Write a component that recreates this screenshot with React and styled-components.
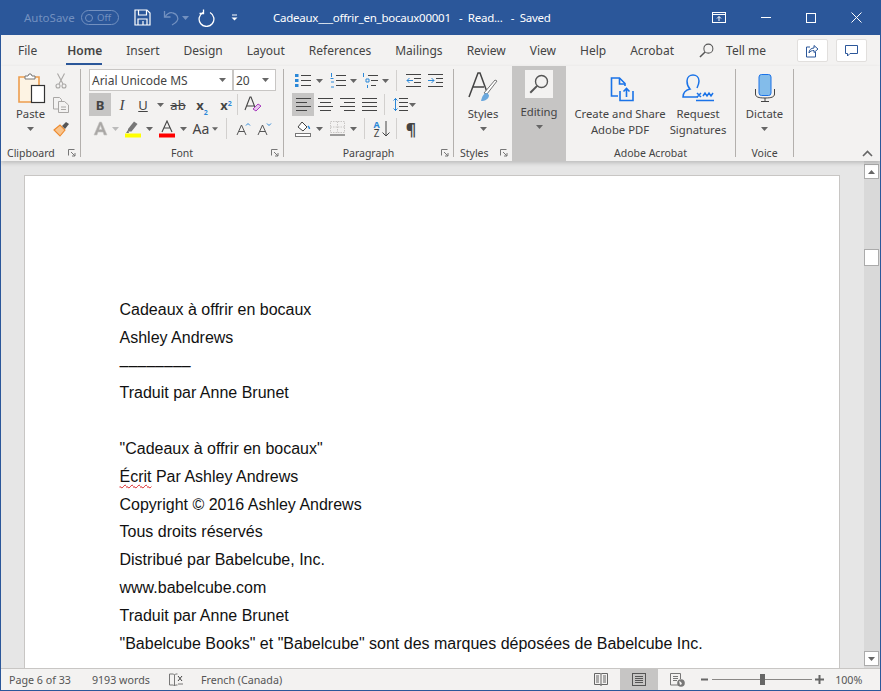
import React from 'react';
import styled, { createGlobalStyle } from 'styled-components';

const BLUE = '#2b579a';
const INK = '#444444';
const LIGHT = '#2b88d8';

const GlobalStyle = createGlobalStyle`
  html, body { margin: 0; padding: 0; background: #fff; }
  body { font-family: "Noto Sans", "Open Sans", sans-serif; font-size: 12px; color: ${INK}; }
`;

const Window = styled.div`
  width: 881px;
  height: 691px;
  box-sizing: border-box;
  display: flex;
  flex-direction: column;
  border: 1px solid ${BLUE};
  border-top: 0;
  overflow: hidden;
`;

const TitleBar = styled.div`
  height: 35px;
  flex: none;
  margin: 0 -1px;
  background: ${BLUE};
  color: #fff;
  display: flex;
  align-items: center;
`;

const AutoSave = styled.span`
  margin-left: 24px;
  color: #7391c0;
  font-size: 11.5px;
  width: 57px;
`;

const Toggle = styled.span`
  width: 38px;
  height: 15px;
  border: 1px solid #7391c0;
  border-radius: 9px;
  box-sizing: border-box;
  display: flex;
  align-items: center;
  gap: 4px;
  padding-left: 3px;
  color: #7391c0;
  font-size: 9.5px;
  &::before {
    content: '';
    width: 8px;
    height: 8px;
    border-radius: 50%;
    border: 1px solid #7391c0;
    box-sizing: border-box;
  }
`;

const Slot = styled.span`
  width: ${p => p.$w}px;
  margin-left: ${p => p.$ml || 0}px;
  flex: none;
  display: flex;
  align-items: center;
  justify-content: center;
`;

const DocTitle = styled.span`
  margin-left: 35px;
  width: 439px;
  font-size: 11.5px;
  letter-spacing: -0.25px;
  white-space: pre;
`;

const TabRow = styled.div`
  height: 31px;
  flex: none;
  background: #f3f2f1;
  display: flex;
  align-items: center;
  padding-left: 17px;
  gap: 24px;
`;

const Tab = styled.span`
  position: relative;
  font-size: 12px;
  font-weight: ${p => (p.$active ? 600 : 400)};
  margin-right: ${p => p.$mr || 0}px;
  line-height: 18px;
  color: ${INK};
  &::after {
    content: ${p => (p.$active ? "''" : 'none')};
    position: absolute;
    left: -1px;
    right: 0;
    bottom: -5px;
    height: 2px;
    background: ${BLUE};
  }
`;

const TellMe = styled.span`
  display: flex;
  align-items: center;
  gap: 12px;
  margin-left: 1px;
  font-size: 12px;
`;

const CornerButton = styled.span`
  width: 31px;
  height: 23px;
  background: #fff;
  border: 1px solid #e1dfdd;
  border-radius: 2px;
  box-sizing: border-box;
  display: flex;
  align-items: center;
  justify-content: center;
  margin-left: ${p => p.$ml}px;
`;

const Ribbon = styled.div`
  height: 95px;
  flex: none;
  background: #f3f2f1;
  display: flex;
  position: relative;
  z-index: 1;
  box-shadow: 0 2px 4px rgba(0, 0, 0, 0.18);
`;

const Group = styled.div`
  width: ${p => p.$w}px;
  flex: none;
  display: flex;
  flex-direction: column;
  background: ${p => (p.$selected ? '#c6c5c4' : 'transparent')};
`;

const GroupBody = styled.div`
  height: 79px;
  display: flex;
  padding-left: ${p => p.$pl || 0}px;
`;

const GroupLabel = styled.div`
  height: 16px;
  display: flex;
  align-items: center;
  justify-content: ${p => (p.$left ? 'flex-start' : 'center')};
  padding-left: ${p => p.$pl || 0}px;
  font-size: 10.5px;
  line-height: 14px;
  position: relative;
`;

const Launcher = styled.span`
  margin-left: auto;
  margin-right: 4px;
  display: flex;
`;

const CornerLauncher = styled.span`
  position: absolute;
  right: 4px;
  display: flex;
`;

const Divider = styled.div`
  width: 1px;
  flex: none;
  margin: 3px 0 4px;
  background: #b3b0ad;
`;

const BigButton = styled.div`
  width: ${p => p.$w}px;
  flex: none;
  display: flex;
  flex-direction: column;
  align-items: center;
  padding-top: ${p => p.$pt ?? 7}px;
  font-size: 11.3px;
  line-height: 16px;
  text-align: center;
`;

const BigIcon = styled.div`
  height: ${p => p.$h || 32}px;
  display: flex;
  align-items: center;
  justify-content: center;
  margin-left: ${p => p.$ml || 0}px;
  margin-bottom: ${p => p.$mb ?? 2}px;
`;

const EditingIcon = styled.div`
  width: 28px;
  height: 28px;
  background: #f3f2f1;
  display: flex;
  align-items: center;
  justify-content: center;
  margin-bottom: 6px;
`;

const BigCaret = styled.div`
  height: 14px;
  display: flex;
  align-items: center;
`;

const SmallColumn = styled.div`
  display: flex;
  flex-direction: column;
  padding-top: 3px;
  margin-left: 3px;
  width: 20px;
`;

const SmallTool = styled.span`
  height: 24px;
  display: flex;
  align-items: center;
  justify-content: center;
`;

const Rows = styled.div`
  display: flex;
  flex-direction: column;
  gap: 1px;
  padding-top: 3px;
`;

const Row = styled.div`
  display: flex;
  height: ${p => p.$h || 23}px;
  align-items: stretch;
`;

const Tool = styled.span`
  width: ${p => p.$w}px;
  margin-left: ${p => p.$ml || 0}px;
  flex: none;
  display: flex;
  align-items: center;
  justify-content: center;
  gap: ${p => p.$gap || 0}px;
  background: ${p => (p.$on ? '#c6c5c4' : 'transparent')};
`;

const RowLine = styled.span`
  width: 1px;
  flex: none;
  margin: 1px ${p => p.$r ?? 4}px 1px ${p => p.$l ?? 4}px;
  background: #d2d0ce;
`;

const Combo = styled.span`
  height: 22px;
  width: ${p => p.$w}px;
  margin-left: ${p => p.$ml || 0}px;
  box-sizing: border-box;
  background: #fff;
  border: 1px solid #c8c6c4;
  display: flex;
  align-items: center;
  justify-content: space-between;
  padding: 0 6px 0 2px;
  font-size: 12px;
  white-space: nowrap;
`;

const SortLetters = styled.span`
  display: flex;
  flex-direction: column;
  align-items: center;
  width: 8px;
`;

const SortLetter = styled.span`
  height: 9px;
  line-height: 9px;
  font-size: ${p => p.$size}px;
  font-weight: ${p => (p.$blue ? 700 : 400)};
  color: ${p => (p.$blue ? LIGHT : INK)};
`;

const Collapse = styled.div`
  margin-left: auto;
  margin-right: 7px;
  align-self: flex-end;
  padding-bottom: 4px;
  display: flex;
`;

const Workspace = styled.div`
  flex: 1;
  min-height: 0;
  display: flex;
  background: #e6e6e6;
`;

const Canvas = styled.div`
  flex: 1;
  min-width: 0;
  padding: 14px 23px 0;
  overflow: hidden;
`;

const Page = styled.div`
  height: 520px;
  box-sizing: border-box;
  width: 816px;
  background: #fff;
  border: 1px solid #c8c6c4;
  padding: 120px 0 0 94.5px;
  font-family: "Liberation Sans", Arial, sans-serif;
  font-size: 16px;
  line-height: 27.8px;
  color: #111;
`;

const Para = styled.div`
  min-height: 27.8px;
  white-space: nowrap;
`;

const Misspelt = styled.span`
  text-decoration: underline wavy #d92020 1px;
  text-underline-offset: 2px;
`;

const Scrollbar = styled.div`
  width: 16px;
  flex: none;
  box-sizing: border-box;
  background: #d9d9d9;
  display: flex;
  flex-direction: column;
  padding: 3px 0 2px 0;
`;

const ScrollButton = styled.div`
  width: 15px;
  height: 15px;
  box-sizing: border-box;
  background: #fff;
  border: 1px solid #ababab;
  display: flex;
  align-items: center;
  justify-content: center;
  margin-top: ${p => p.$mt || 0};
`;

const Thumb = styled.div`
  width: 15px;
  height: 17px;
  box-sizing: border-box;
  background: #fff;
  border: 1px solid #ababab;
  margin-top: 70px;
`;

const StatusBar = styled.div`
  height: 22px;
  flex: none;
  box-sizing: border-box;
  border-top: 1px solid #c8c6c4;
  background: #f3f2f1;
  display: flex;
  align-items: stretch;
  font-size: 10.7px;
  color: #555;
`;

const StatusText = styled.span`
  display: flex;
  align-items: center;
  margin-left: ${p => p.$ml}px;
  white-space: nowrap;
`;

const StatusIcon = styled.span`
  width: ${p => p.$w}px;
  margin-left: ${p => p.$ml || 0}px;
  flex: none;
  display: flex;
  align-items: center;
  justify-content: center;
  background: ${p => (p.$on ? '#c6c5c4' : 'transparent')};
`;

const ZoomTrack = styled.span`
  width: 100px;
  margin-left: 4px;
  flex: none;
  position: relative;
  align-self: center;
  height: 1px;
  background: #8a8886;
`;

const ZoomThumb = styled.span`
  position: absolute;
  left: 48px;
  top: -5px;
  width: 5px;
  height: 11px;
  background: #666;
`;

const Svg = ({ w, h, children, ...rest }) => (
  <svg width={w} height={h} viewBox={`0 0 ${w} ${h}`} fill="none" {...rest}>{children}</svg>
);

const Caret = ({ color = '#666' }) => (
  <Svg w={7} h={4}><path d="M0 0h7L3.5 4z" fill={color} /></Svg>
);

const SaveIcon = () => (
  <Svg w={17} h={17} stroke="#fff" strokeWidth="1.2">
    <path d="M1 1h12l3 3v12H1z" /><path d="M4.5 1v5h8V1M4 16v-6h9v6" /><path d="M9 12v4" />
  </Svg>
);

const UndoIcon = () => (
  <Svg w={17} h={16} stroke="#7391c0" strokeWidth="1.3">
    <path d="M1.5 1v6h6" /><path d="M2 7c2-3 5-5 8-4 4 1 6 5 4 8-1 2-3 3-5 4" />
  </Svg>
);

const RedoIcon = () => (
  <Svg w={17} h={18} stroke="#fff" strokeWidth="1.3">
    <path d="M5 3.5A7.4 7.4 0 1 0 12 3.5" /><path d="M5.5 0.5v4h-4" />
  </Svg>
);

const QatIcon = () => (
  <Svg w={7} h={7}><path d="M1 1h5" stroke="#fff" /><path d="M0.5 3.5h6L3.5 6.5z" fill="#fff" /></Svg>
);

const RibbonDisplayIcon = () => (
  <Svg w={14} h={11} stroke="#fff">
    <rect x=".5" y=".5" width="13" height="10" /><path d="M.5 2.5h13" /><path d="M7 9V4.5M5 6.5l2-2 2 2" />
  </Svg>
);

const SearchIcon = ({ color = '#555', size = 16 }) => (
  <svg width={size} height={size} viewBox="0 0 16 16" fill="none" stroke={color} strokeWidth="1.1">
    <circle cx="10" cy="6" r="4.8" /><path d="M6.5 9.5 1 15" strokeWidth="1.6" />
  </svg>
);

const ShareIcon = () => (
  <Svg w={14} h={14} stroke="#2b579a">
    <path d="M5 3H1.5v10h9V8" /><path d="M4 9c0-3 2-5 5-5V1.5L13 5l-4 3.5V6.500C7 6.500 5 7 4 9z" />
  </Svg>
);

const CommentIcon = () => (
  <Svg w={13} h={12} stroke="#2b579a"><path d="M.5 .5h12v8H5L2.500 11V8.500h-2z" /></Svg>
);

const PasteIcon = () => (
  <Svg w={28} h={31}>
    <path d="M1 4h20v25H1z" fill="#fdf3e3" stroke="#ed9d4e" strokeWidth="1.6" />
    <path d="M7 5V3h3l1-2h2l1 2h3v3H7z" fill="#fff" stroke="#777" />
    <rect x="13.500" y="12.500" width="13" height="17" fill="#fff" stroke="#333" strokeWidth="1.200" />
  </Svg>
);

const CutIcon = () => (
  <Svg w={12} h={16} stroke="#a9a7a5" strokeWidth="1.100">
    <path d="M2.500 .5 8 11M9.500 .5 4 11" /><circle cx="3" cy="13" r="2" /><circle cx="9" cy="13" r="2" />
  </Svg>
);

const CopyIcon = () => (
  <Svg w={16} h={16} stroke="#a9a7a5">
    <path d="M.5 .5h6l2 2V12h-8z" fill="#f3f2f1" /><path d="M5.500 4.500h6l4 3.500v7.500h-10z" fill="#f3f2f1" /><path d="M8 10h5M8 12.500h5" />
  </Svg>
);

const PainterIcon = () => (
  <Svg w={17} h={16}>
    <path d="M1 9 7 4l5 5-5 6C5 13 3 11 1 9z" fill="#f9c48c" stroke="#ed8a2f" strokeWidth="1.100" />
    <path d="M9 5l4-4 3 2-4 5z" fill="#555" />
  </Svg>
);

const Launch = () => (
  <Svg w={8} h={8} stroke="#777"><path d="M.5 .5h6M.5 .5v6" /><path d="M3 3l4 4M7 4v3H4" /></Svg>
);

const Letter = styled.span`
  font-family: ${p => (p.$serif ? '"Liberation Serif", serif' : '"Noto Sans", sans-serif')};
  font-size: ${p => p.$size || 13}px;
  font-weight: ${p => (p.$bold ? 700 : 400)};
  font-style: ${p => (p.$italic ? 'italic' : 'normal')};
  text-decoration: ${p => p.$deco || 'none'};
  color: ${p => p.$color || INK};
  line-height: 16px;
  position: relative;
`;

const Sub = styled.span`
  font-size: 7px;
  font-weight: 700;
  color: ${LIGHT};
  position: absolute;
  left: 100%;
  top: ${p => (p.$up ? -1 : 8)}px;
`;

const ClearIcon = () => (
  <Svg w={17} h={17}>
    <path d="M1 14 6 1h1l5 13M3 10h7" stroke="#444" strokeWidth="1.100" />
    <path d="M9 13l5-5 3 2-5 5z" fill="#e7c6ee" stroke="#a83dbd" />
  </Svg>
);

const EffectsA = () => (
  <Svg w={15} h={15}><path d="M1 14 6.500 1h2L14 14h-3l-1-3H5l-1 3zM6 8.500h3L7.500 4.500z" fill="#a9a7a5" stroke="#c8c6c4" strokeWidth=".6" /></Svg>
);

const Highlighter = () => (
  <Svg w={16} h={18}>
    <path d="M3 9 9 1.500l3.500 2.500-6 7.500H3z" fill="#777" /><path d="M3 10 1 13h3z" fill="#777" />
    <rect y="13.500" width="16" height="4" fill="#ffff00" />
  </Svg>
);

const FontColor = () => (
  <Svg w={16} h={18}>
    <path d="M3 12 8 1l5 11M5 8h6" stroke="#444" strokeWidth="1.100" />
    <rect y="13.500" width="16" height="4" fill="#ff0000" />
  </Svg>
);

const GrowFont = ({ down }) => (
  <Svg w={15} h={14}>
    <path d="M1 13 5.500 3 10 13M3 9.500h5" stroke="#555" />
    <path d={down ? 'M10 1.500l2 2 2-2' : 'M10 3.500l2-2 2 2'} stroke={LIGHT} />
  </Svg>
);

const Lines = ({ rows, w = 15, h = 15 }) => (
  <Svg w={w} h={h} stroke="#444">
    {rows.map(([x1, x2, y], i) => <path key={i} d={`M${x1} ${y}.5H${x2}`} />)}
  </Svg>
);

const BulletsIcon = () => (
  <Svg w={16} h={15}>
    <path d="M0 1h3.500v3H0zM0 6h3.500v3H0zM0 11h3.500v3H0z" fill={LIGHT} />
    <path d="M6 2.500h10M6 7.500h10M6 12.500h10" stroke="#444" />
  </Svg>
);

const NumberingIcon = () => (
  <Svg w={16} h={15}>
    <path d="M1.500 0v4M1 9h3M1 14h3M0.500 5.500h3" stroke={LIGHT} />
    <path d="M6 2.500h10M6 7.500h10M6 12.500h10" stroke="#444" />
  </Svg>
);

const MultiIcon = () => (
  <Svg w={16} h={15}>
    <path d="M1.500 0v4M4 6h3v3H4zM5.500 12v3" stroke={LIGHT} />
    <path d="M6 2.500h10M9 7.500h7M9 12.500h5" stroke="#444" />
  </Svg>
);

const IndentIcon = ({ flip }) => (
  <Svg w={15} h={13}>
    <path d="M0 .5h15M8 4.500h7M8 8.500h7M0 12.500h15" stroke="#444" />
    <path d={flip ? 'M0 6.500h6M3.500 4l2.500 2.500L3.500 9' : 'M1 6.500h6M3.500 4 1 6.500 3.500 9'} stroke={LIGHT} />
  </Svg>
);

const LineSpacing = () => (
  <Svg w={15} h={15}>
    <path d="M2.500 1v13M.5 3.500l2-2 2 2M.5 11.500l2 2 2-2" stroke={LIGHT} />
    <path d="M6 1.500h9M6 5.500h9M6 9.500h9M6 13.500h9" stroke="#444" />
  </Svg>
);

const ShadingIcon = () => (
  <Svg w={16} h={16}>
    <path d="M3 6 7 1l5 5-4 4z" fill="#fff" stroke="#444" />
    <path d="M13 5c1 1 1.500 2 1.500 3" stroke={LIGHT} strokeWidth="1.500" />
    <rect x=".5" y="12.500" width="15" height="3" fill="#fff" stroke="#777" />
  </Svg>
);

const BordersIcon = () => (
  <Svg w={15} h={15}>
    <path d="M.5 .5h14v11H.5zM7.500 .5v11M.5 6h14" stroke="#c8c6c4" strokeDasharray="1.500 1" />
    <path d="M0 14h15" stroke="#444" />
  </Svg>
);

const SortArrow = () => (
  <Svg w={8} h={17}><path d="M4 1v15M.5 12.500 4 16l3.500-3.500" stroke="#444" /></Svg>
);

const StylesIcon = () => (
  <Svg w={31} h={31}>
    <path d="M1 25 10 1h2l7 19M5 15h11" stroke="#444" strokeWidth="1.500" />
    <path d="M16 21 27 8l2 1-10 13z" fill="#fff" stroke="#777" />
    <path d="M13 29c1-5 3-8 6-8l2 2c0 4-4 6-8 6z" fill="#6ba8dd" />
  </Svg>
);

const PdfIcon = () => (
  <Svg w={24} h={25} stroke="#1a73e8" strokeWidth="1.600">
    <path d="M8 19H1.500V1h8L15 6.500V9" /><path d="M9.500 1v6H15" />
    <path d="M10 14v9.500h13V14" /><path d="M16.500 20v-8M13.500 14.500l3-3 3 3" />
  </Svg>
);

const SignIcon = () => (
  <Svg w={32} h={28} stroke="#1a73e8" strokeWidth="1.500">
    <path d="M16 23H1c0-5 3-7 7-8-2-2-3-5-3-8 0-4 3-6 6-6s6 2 6 6c0 3-1 5-2 7" />
    <path d="M15 19l4 4M19 19l-4 4M21 22l2-3 2 3 2-3 2 3 2-3" /><path d="M14 26.500h18" />
  </Svg>
);

const MicIcon = () => (
  <Svg w={20} h={28}>
    <rect x="4" y=".5" width="12" height="21" rx="2.500" fill="#83bcea" stroke="#1a73e8" />
    <path d="M.5 15v5c0 3 3 4 9.500 4s9.500-1 9.500-4v-5M10 24v3M6 27.500h8" stroke="#444" />
  </Svg>
);

const BookIcon = () => (
  <Svg w={15} h={14} stroke="#777">
    <path d="M.5 1h4l1 1v11l-1-1h-4zM5.500 2l1-1h2M5.500 13l1-1h2" /><path d="M9 3l4 5M13 3 9 8" stroke="#444" /><path d="M9 11h5" />
  </Svg>
);

const ReadIcon = () => (
  <Svg w={14} h={13} stroke="#666">
    <path d="M.5 .5h6l.5 1 .5-1h6v11h-6l-.5 1-.5-1h-6z" /><path d="M2 3h3M2 5h3M2 7h3M2 9h3M9 3h3M9 5h3M9 7h3M9 9h3M7 1.500v11" />
  </Svg>
);

const PrintIcon = () => (
  <Svg w={14} h={13} stroke="#555">
    <rect x=".5" y=".5" width="13" height="12" /><path d="M3 3.500h8M3 5.500h8M3 7.500h8M3 9.500h8" />
  </Svg>
);

const WebIcon = () => (
  <Svg w={15} h={14}>
    <path d="M9 12H.5V.5h10V6" stroke="#777" /><path d="M3 3.500h5M3 5.500h5M3 7.500h4" stroke="#777" />
    <circle cx="11" cy="10" r="3.800" fill="#777" /><path d="M9 8l2 1 1 2-2 1z" fill="#f3f2f1" />
  </Svg>
);

const Plus = () => <Svg w={9} h={9}><path d="M0 4.500h9M4.500 0v9" stroke="#666" strokeWidth="2" /></Svg>;
const Minus = () => <Svg w={7} h={3}><path d="M0 1.500h7" stroke="#666" strokeWidth="2" /></Svg>;

const lines = [
  'Cadeaux à offrir en bocaux',
  'Ashley Andrews',
  '––––––––',
  'Traduit par Anne Brunet',
  '',
  '"Cadeaux à offrir en bocaux"',
  null,
  'Copyright © 2016 Ashley Andrews',
  'Tous droits réservés',
  'Distribué par Babelcube, Inc.',
  'www.babelcube.com',
  'Traduit par Anne Brunet',
  '"Babelcube Books" et "Babelcube" sont des marques déposées de Babelcube Inc.',
];

const tabs = ['Insert', 'Design', 'Layout', 'References', 'Mailings', 'Review', 'View', 'Help', 'Acrobat'];

export default function App() {
  return (
    <>
      <GlobalStyle />
      <Window>
        <TitleBar>
          <AutoSave>AutoSave</AutoSave>
          <Toggle>Off</Toggle>
          <Slot $w={17} $ml={15}><SaveIcon /></Slot>
          <Slot $w={17} $ml={12}><UndoIcon /></Slot>
          <Slot $w={7} $ml={2}><Caret color="#7391c0" /></Slot>
          <Slot $w={17} $ml={9}><RedoIcon /></Slot>
          <Slot $w={7} $ml={16}><QatIcon /></Slot>
          <DocTitle>{'Cadeaux___offrir_en_bocaux00001   -  Read...   -  Saved'}</DocTitle>
          <Slot $w={14}><RibbonDisplayIcon /></Slot>
          <Slot $w={10} $ml={35}><Svg w={10} h={1}><path d="M0 .5h10" stroke="#fff" /></Svg></Slot>
          <Slot $w={10} $ml={35}><Svg w={10} h={10}><rect x=".5" y=".5" width="9" height="9" stroke="#fff" /></Svg></Slot>
          <Slot $w={11} $ml={35}><Svg w={11} h={11}><path d="M.5 .5l10 10M10.500 .5l-10 10" stroke="#fff" /></Svg></Slot>
        </TitleBar>

        <TabRow>
          <Tab $mr={6}>File</Tab>
          <Tab $active>Home</Tab>
          {tabs.map(t => <Tab key={t}>{t}</Tab>)}
          <TellMe><SearchIcon size={15} />Tell me</TellMe>
          <CornerButton $ml={7}><ShareIcon /></CornerButton>
          <CornerButton $ml={-16}><CommentIcon /></CornerButton>
        </TabRow>

        <Ribbon>
          <Group $w={79}>
            <GroupBody $pl={12}>
              <BigButton $w={35}>
                <BigIcon $ml={3} $h={31}><PasteIcon /></BigIcon>
                Paste
                <BigCaret><Caret /></BigCaret>
              </BigButton>
              <SmallColumn>
                <SmallTool><CutIcon /></SmallTool>
                <SmallTool><CopyIcon /></SmallTool>
                <SmallTool><PainterIcon /></SmallTool>
              </SmallColumn>
            </GroupBody>
            <GroupLabel $left $pl={6}>Clipboard<Launcher><Launch /></Launcher></GroupLabel>
          </Group>
          <Divider />

          <Group $w={202}>
            <GroupBody $pl={8}>
              <Rows>
                <Row>
                  <Combo $w={144}>Arial Unicode MS<Caret /></Combo>
                  <Combo $w={43} $ml={0}>20<Caret /></Combo>
                </Row>
                <Row>
                  <Tool $w={22} $on><Letter $bold>B</Letter></Tool>
                  <Tool $w={22}><Letter $italic $serif $size={15}>I</Letter></Tool>
                  <Tool $w={20}><Letter $deco="underline">U</Letter></Tool>
                  <Tool $w={14}><Caret /></Tool>
                  <Tool $w={22}><Letter $deco="line-through">ab</Letter></Tool>
                  <Tool $w={22}><Letter $bold>x<Sub>2</Sub></Letter></Tool>
                  <Tool $w={22} $ml={2}><Letter $bold>x<Sub $up>2</Sub></Letter></Tool>
                  <RowLine $l={2} $r={3} />
                  <Tool $w={22}><ClearIcon /></Tool>
                </Row>
                <Row>
                  <Tool $w={20} $ml={1}><EffectsA /></Tool>
                  <Tool $w={10}><Caret color="#bbb" /></Tool>
                  <Tool $w={22} $ml={2}><Highlighter /></Tool>
                  <Tool $w={10}><Caret /></Tool>
                  <Tool $w={22} $ml={2}><FontColor /></Tool>
                  <Tool $w={10}><Caret /></Tool>
                  <Tool $w={22} $ml={2}><Letter $size={14}>Aa</Letter></Tool>
                  <Tool $w={6}><Caret /></Tool>
                  <RowLine $l={8} $r={5} />
                  <Tool $w={22}><GrowFont /></Tool>
                  <Tool $w={20}><GrowFont down /></Tool>
                </Row>
              </Rows>
            </GroupBody>
            <GroupLabel>Font<CornerLauncher><Launch /></CornerLauncher></GroupLabel>
          </Group>
          <Divider />

          <Group $w={169}>
            <GroupBody $pl={8}>
              <Rows>
                <Row>
                  <Tool $w={21}><BulletsIcon /></Tool>
                  <Tool $w={12}><Caret /></Tool>
                  <Tool $w={23} $ml={1}><NumberingIcon /></Tool>
                  <Tool $w={9}><Caret /></Tool>
                  <Tool $w={22} $ml={1}><MultiIcon /></Tool>
                  <Tool $w={9}><Caret /></Tool>
                  <RowLine $l={6} $r={5} />
                  <Tool $w={22}><IndentIcon /></Tool>
                  <Tool $w={22}><IndentIcon flip /></Tool>
                </Row>
                <Row>
                  <Tool $w={22} $on><Lines rows={[[0, 15, 1], [0, 11, 5], [0, 15, 9], [0, 11, 13]]} /></Tool>
                  <Tool $w={22}><Lines rows={[[0, 15, 1], [2, 13, 5], [0, 15, 9], [2, 13, 13]]} /></Tool>
                  <Tool $w={22}><Lines rows={[[0, 15, 1], [4, 15, 5], [0, 15, 9], [4, 15, 13]]} /></Tool>
                  <Tool $w={22}><Lines rows={[[0, 15, 1], [0, 15, 5], [0, 15, 9], [0, 15, 13]]} /></Tool>
                  <RowLine $l={4} $r={7} />
                  <Tool $w={16}><LineSpacing /></Tool>
                  <Tool $w={8}><Caret /></Tool>
                </Row>
                <Row>
                  <Tool $w={22}><ShadingIcon /></Tool>
                  <Tool $w={10}><Caret /></Tool>
                  <Tool $w={23} $ml={2}><BordersIcon /></Tool>
                  <Tool $w={9}><Caret /></Tool>
                  <RowLine $l={6} $r={5} />
                  <Tool $w={22} $gap={1}>
                    <SortLetters>
                      <SortLetter $blue $size={9}>A</SortLetter>
                      <SortLetter $size={10}>Z</SortLetter>
                    </SortLetters>
                    <SortArrow />
                  </Tool>
                  <RowLine $l={4} $r={3} />
                  <Tool $w={22}><Letter $size={16} $bold>¶</Letter></Tool>
                </Row>
              </Rows>
            </GroupBody>
            <GroupLabel>Paragraph<CornerLauncher><Launch /></CornerLauncher></GroupLabel>
          </Group>
          <Divider />

          <Group $w={58}>
            <GroupBody>
              <BigButton $w={58} $pt={6}>
                <BigIcon $h={31} $mb={3}><StylesIcon /></BigIcon>
                Styles
                <BigCaret><Caret /></BigCaret>
              </BigButton>
            </GroupBody>
            <GroupLabel $left $pl={6}>Styles<Launcher><Launch /></Launcher></GroupLabel>
          </Group>

          <Group $w={54} $selected>
            <GroupBody>
              <BigButton $w={54} $pt={4}>
                <EditingIcon><SearchIcon size={20} /></EditingIcon>
                Editing
                <BigCaret><Caret /></BigCaret>
              </BigButton>
            </GroupBody>
          </Group>

          <Group $w={169}>
            <GroupBody $pl={4}>
              <BigButton $w={100} $pt={10}>
                <BigIcon $h={26} $mb={4} $ml={3}><PdfIcon /></BigIcon>
                Create and Share<br />Adobe PDF
              </BigButton>
              <BigButton $w={56} $pt={8}>
                <BigIcon $h={28} $mb={4}><SignIcon /></BigIcon>
                Request<br />Signatures
              </BigButton>
            </GroupBody>
            <GroupLabel>Adobe Acrobat</GroupLabel>
          </Group>
          <Divider />

          <Group $w={57}>
            <GroupBody>
              <BigButton $w={57} $pt={8}>
                <BigIcon $h={28} $mb={4}><MicIcon /></BigIcon>
                Dictate
                <BigCaret><Caret /></BigCaret>
              </BigButton>
            </GroupBody>
            <GroupLabel>Voice</GroupLabel>
          </Group>
          <Divider />

          <Collapse>
            <Svg w={11} h={7}><path d="M1 6l4.500-4.500L10 6" stroke="#666" strokeWidth="1.600" /></Svg>
          </Collapse>
        </Ribbon>

        <Workspace>
          <Canvas>
            <Page>
              {lines.map((l, i) => (
                <Para key={i}>
                  {l === null ? <><Misspelt>Écrit</Misspelt> Par Ashley Andrews</> : l}
                </Para>
              ))}
            </Page>
          </Canvas>
          <Scrollbar>
            <ScrollButton><Svg w={7} h={4}><path d="M0 4h7L3.500 0z" fill="#666" /></Svg></ScrollButton>
            <Thumb />
            <ScrollButton $mt="auto"><Caret /></ScrollButton>
          </Scrollbar>
        </Workspace>

        <StatusBar>
          <StatusText $ml={8}>Page 6 of 33</StatusText>
          <StatusText $ml={21}>9193 words</StatusText>
          <StatusIcon $w={15} $ml={19}><BookIcon /></StatusIcon>
          <StatusText $ml={17}>French (Canada)</StatusText>
          <StatusIcon $w={38} $ml={300}><ReadIcon /></StatusIcon>
          <StatusIcon $w={38} $on><PrintIcon /></StatusIcon>
          <StatusIcon $w={38}><WebIcon /></StatusIcon>
          <StatusIcon $w={7} $ml={5}><Minus /></StatusIcon>
          <ZoomTrack><ZoomThumb /></ZoomTrack>
          <StatusIcon $w={9} $ml={3}><Plus /></StatusIcon>
          <StatusText $ml={11}>100%</StatusText>
        </StatusBar>
      </Window>
    </>
  );
}
